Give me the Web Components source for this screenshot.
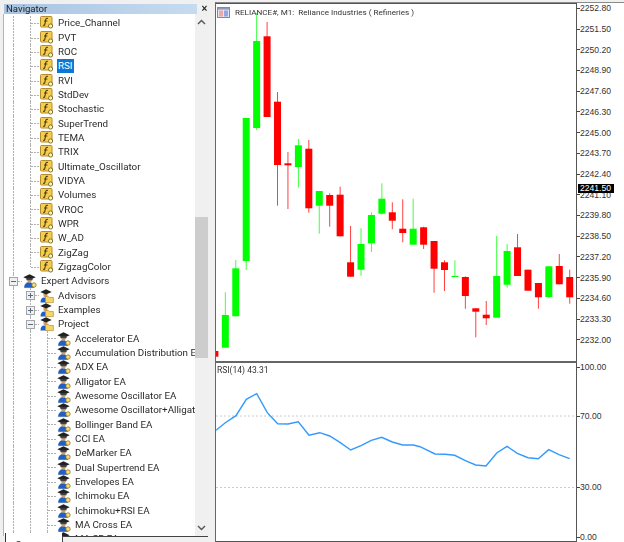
<!DOCTYPE html>
<html>
<head>
<meta charset="utf-8">
<title>Navigator</title>
<style>
    html, body { margin: 0; padding: 0; background: #f0f0f0; }
    body { width: 624px; height: 542px; overflow: hidden; font-family: Roboto, "Liberation Sans", sans-serif; }
    .app { display: flex; width: 624px; height: 542px; filter: blur(0.3px); }
</style>
</head>
<body>
<div class="app">
    <nav-panel>
        <tree-row guides="line branch" icon="fn">Price_Channel</tree-row>
        <tree-row guides="line branch" icon="fn">PVT</tree-row>
        <tree-row guides="line branch" icon="fn">ROC</tree-row>
        <tree-row guides="line branch" icon="fn" selected>RSI</tree-row>
        <tree-row guides="line branch" icon="fn">RVI</tree-row>
        <tree-row guides="line branch" icon="fn">StdDev</tree-row>
        <tree-row guides="line branch" icon="fn">Stochastic</tree-row>
        <tree-row guides="line branch" icon="fn">SuperTrend</tree-row>
        <tree-row guides="line branch" icon="fn">TEMA</tree-row>
        <tree-row guides="line branch" icon="fn">TRIX</tree-row>
        <tree-row guides="line branch" icon="fn">Ultimate_Oscillator</tree-row>
        <tree-row guides="line branch" icon="fn">VIDYA</tree-row>
        <tree-row guides="line branch" icon="fn">Volumes</tree-row>
        <tree-row guides="line branch" icon="fn">VROC</tree-row>
        <tree-row guides="line branch" icon="fn">WPR</tree-row>
        <tree-row guides="line branch" icon="fn">W_AD</tree-row>
        <tree-row guides="line branch" icon="fn">ZigZag</tree-row>
        <tree-row guides="line last" icon="fn">ZigzagColor</tree-row>
        <tree-row guides="minus" icon="ea">Expert Advisors</tree-row>
        <tree-row guides="line plus" icon="folder">Advisors</tree-row>
        <tree-row guides="line plus" icon="folder">Examples</tree-row>
        <tree-row guides="line minus" icon="folder">Project</tree-row>
        <tree-row guides="line line branch" icon="ea">Accelerator EA</tree-row>
        <tree-row guides="line line branch" icon="ea">Accumulation Distribution EA</tree-row>
        <tree-row guides="line line branch" icon="ea">ADX EA</tree-row>
        <tree-row guides="line line branch" icon="ea">Alligator EA</tree-row>
        <tree-row guides="line line branch" icon="ea">Awesome Oscillator EA</tree-row>
        <tree-row guides="line line branch" icon="ea">Awesome Oscillator+Alligator EA</tree-row>
        <tree-row guides="line line branch" icon="ea">Bollinger Band EA</tree-row>
        <tree-row guides="line line branch" icon="ea">CCI EA</tree-row>
        <tree-row guides="line line branch" icon="ea">DeMarker EA</tree-row>
        <tree-row guides="line line branch" icon="ea">Dual Supertrend EA</tree-row>
        <tree-row guides="line line branch" icon="ea">Envelopes EA</tree-row>
        <tree-row guides="line line branch" icon="ea">Ichimoku EA</tree-row>
        <tree-row guides="line line branch" icon="ea">Ichimoku+RSI EA</tree-row>
        <tree-row guides="line line branch" icon="ea">MA Cross EA</tree-row>
        <tree-row guides="line line branch" icon="ea">MA SR EA</tree-row>
    </nav-panel>
    <chart-window>
        <candle-pane></candle-pane>
        <rsi-pane></rsi-pane>
    </chart-window>
</div>
<script>
const ICONS = {
    fn: `<rect x=".5" y=".5" width="11.5" height="10.5" rx="1" fill="#f4cd50" stroke="#b48c28"/>
         <path d="M8 2.4C6.6 1.9 5.9 2.6 5.7 3.8L4.9 8.2C4.7 9.3 4 9.6 3.1 9.3" fill="none" stroke="#4d3c10" stroke-width="1.1"/>
         <path d="M4 5H7.4" stroke="#4d3c10" stroke-width="1"/>
         <circle cx="10.6" cy="10" r="2.1" fill="#fff3b8" stroke="#75661f" stroke-width=".9"/>`,
    ea: `<path d="M1.5 13.6C1.5 10 3.5 8.4 6 8.4S10.5 10 10.5 13.6Z" fill="#1f5fc8" stroke="#17458f" stroke-width=".5"/>
         <circle cx="6.5" cy="6.6" r="2.2" fill="#c9a070"/>
         <path d="M.3 3.2 6.5.3 12.7 3.2 6.5 6Z" fill="#222"/>
         <path d="M3.4 4.3V6.2H9.6V4.3" fill="#444"/>
         <circle cx="11" cy="11" r="2.2" fill="#f7e27a" stroke="#8a7420" stroke-width=".8"/>`,
    folder: `<path d="M.5 13.4C.5 10 2 8.4 4 8.4S7.5 10 7.5 13.4Z" fill="#1f5fc8"/>
         <circle cx="5.5" cy="6" r="2.2" fill="#c9a070"/>
         <path d="M.3 3 6 .3 11.7 3 6 5.6Z" fill="#222"/>
         <path d="M5.5 7.5H8.5L9.4 8.5H13.4V13.6H5.5Z" fill="#f6d465" stroke="#b9932f" stroke-width=".7"/>`
};

class TreeRow extends HTMLElement {
    constructor() {
        super();
        this.attachShadow({ mode: 'open' });
        const guides = (this.getAttribute('guides') || '').split(' ');
        const cells = guides.map(g => {
            const box = g === 'plus' || g === 'minus';
            return `<span class="cell ${g}">${box ? `<i class="box">${g === 'plus' ? '<b class="v"></b>' : ''}<b class="h"></b></i>` : ''}</span>`;
        }).join('');
        this.shadowRoot.innerHTML = `
            <style>
                :host { display: flex; align-items: center; height: 14.33px; padding-left: 1px; white-space: nowrap; }
                .cell { flex: none; width: 17px; height: 100%; position: relative; }
                .line, .branch, .plus, .minus { background: repeating-linear-gradient(to bottom, #b0b0b0 0 2px, transparent 2px 3px) 8px 0 / 1px 100% no-repeat; }
                .branch::after, .last::after {
                    content: ''; position: absolute; left: 9px; right: 0; top: 7px; height: 1px;
                    background: repeating-linear-gradient(to right, #b0b0b0 0 2px, transparent 2px 3px);
                }
                .last { background: repeating-linear-gradient(to bottom, #b0b0b0 0 2px, transparent 2px 3px) 8px 0 / 1px 50% no-repeat; }
                .plus::after, .minus::after {
                    content: ''; position: absolute; left: 13px; right: 0; top: 7px; height: 1px;
                    background: repeating-linear-gradient(to right, #b0b0b0 0 2px, transparent 2px 3px);
                }
                .box {
                    position: absolute; left: 4px; top: 3px; width: 7px; height: 7px;
                    border: 1px solid #a4a4a4; background: #eef0f2;
                }
                .box b { position: absolute; background: #5a6a80; }
                .box .h { left: 1px; right: 1px; top: 3px; height: 1px; }
                .box .v { top: 1px; bottom: 1px; left: 3px; width: 1px; }
                svg { flex: none; width: 14px; height: 14px; margin-left: 1px; overflow: visible; }
                .label {
                    margin-left: 3px; padding: 0 1px; height: 14px;
                    font: 9.8px/14px Roboto, "Liberation Sans", sans-serif; color: #2b2b2b;
                }
                :host([selected]) .label { background: #0a78d4; color: #fff; }
            </style>
            ${cells}
            <svg viewBox="0 0 14 14">${ICONS[this.getAttribute('icon')]}</svg>
            <span class="label"><slot></slot></span>
        `;
    }
}
customElements.define('tree-row', TreeRow);

class NavPanel extends HTMLElement {
    constructor() {
        super();
        this.attachShadow({ mode: 'open' });
        this.shadowRoot.innerHTML = `
            <style>
                :host { display: flex; flex-direction: column; flex: none; width: 212px; height: 542px; padding: 4px 0 0 3px; box-sizing: border-box; }
                .title { display: flex; height: 10px; align-items: center; }
                .caption {
                    width: 193px; height: 10px; margin-left: 1px; padding-left: 2px; box-sizing: border-box;
                    background: linear-gradient(to right, #a8c4e2, #c6dbf0);
                    font: 9.6px/10px Roboto, "Liberation Sans", sans-serif; color: #222;
                }
                .close { width: 15px; text-align: center; font: bold 10px/10px "Liberation Sans", sans-serif; color: #222; }
                .body { display: flex; height: 522px; border-left: 1px solid #b5b5b5; }
                .tree { width: 191px; overflow: hidden; background: #fff; padding-top: 2.2px; box-sizing: border-box; }
                .bar { width: 13px; display: flex; flex-direction: column; background: #f0f0f0; }
                .btn { flex: none; height: 16px; display: flex; align-items: center; justify-content: center; }
                .gap { flex: none; height: 187px; }
                .thumb { flex: none; height: 141px; background: #cdcdcd; }
                .tabs { display: flex; height: 9px; margin-top: -3px; position: relative; overflow: hidden; }
                .tab { box-sizing: border-box; font: 9.8px/12px Roboto, "Liberation Sans", sans-serif; color: #333; }
                .on { width: 57px; margin-left: 2px; padding: 6px 0 0 9px; background: #fff; border-left: 1px solid #333; }
                .off { width: 146px; margin-top: 3px; padding: 3px 0 0 8px; background: #f0f0f0; border-top: 1px solid #444; border-left: 1px solid #444; }
            </style>
            <div class="title"><div class="caption">Navigator</div><div class="close">×</div></div>
            <div class="body">
                <div class="tree"><slot></slot></div>
                <div class="bar">
                    <div class="btn"><svg width="9" height="6"><path d="M1 5 4.5 1.5 8 5" fill="none" stroke="#555" stroke-width="1.4"/></svg></div>
                    <div class="gap"></div>
                    <div class="thumb"></div>
                    <div style="flex:1"></div>
                    <div class="btn"><svg width="9" height="6"><path d="M1 1 4.5 4.5 8 1" fill="none" stroke="#555" stroke-width="1.4"/></svg></div>
                </div>
            </div>
            <div class="tabs"><div class="tab on">Common</div><div class="tab off">Favorites</div></div>
        `;
    }
}
customElements.define('nav-panel', NavPanel);

class ChartWindow extends HTMLElement {
    constructor() {
        super();
        this.attachShadow({ mode: 'open' });
        this.shadowRoot.innerHTML = `
            <style>
                :host {
                    display: flex; flex-direction: column; flex: none; width: 409px; height: 540px; margin: 2px 0 0 3px;
                    box-sizing: border-box; border-top: 1px solid #8a8a8a; border-left: 1px solid #666; background: #fff;
                }
            </style>
            <slot></slot>
        `;
    }
}
customElements.define('chart-window', ChartWindow);

// labels go down the axis, each with its gap to the one above
class ChartAxis extends HTMLElement {
    constructor() {
        super();
        this.attachShadow({ mode: 'open' });
        const labels = this.getAttribute('labels').split(' ');
        const gaps = this.getAttribute('gaps').split(' ');
        const rows = labels.map((l, i) => `<div class="tick" style="margin-top:${gaps[i] || gaps[gaps.length - 1]}px">${l}</div>`).join('');
        const tag = this.getAttribute('tag');
        this.shadowRoot.innerHTML = `
            <style>
                :host { display: block; flex: none; width: 46px; background: #fff; position: relative; }
                .tick { display: flex; align-items: center; height: 10px; font: 8.6px/10px "Liberation Sans", sans-serif; color: #333; white-space: nowrap; }
                .tick::before { content: ''; width: 3px; height: 1px; background: #444; }
                .tag {
                    position: absolute; left: 1px; top: ${this.getAttribute('tag-top')}px; width: 36px; height: 9px; padding-left: 2px; box-sizing: border-box;
                    background: #000; color: #fff; font: 8.6px/9px "Liberation Sans", sans-serif;
                }
            </style>
            ${rows}${tag ? `<div class="tag">${tag}</div>` : ''}
        `;
    }
}
customElements.define('chart-axis', ChartAxis);

// kind, wick top, body top, body bottom, wick bottom (page y)
const CANDLES = [
    ['r', 351, 351, 356.7, 356.7], ['g', 292.3, 315, 347.7, 347.7], ['g', 260, 268.3, 316.3, 316.3],
    ['g', 118, 118, 261, 270], ['g', 13, 41, 128, 130], ['r', 22, 36.3, 117, 117],
    ['r', 92, 101.7, 165, 205.7], ['r', 152, 163.3, 165.3, 209], ['g', 139, 145.3, 167, 187.5],
    ['r', 140, 148.7, 208.3, 212.7], ['g', 191, 191, 205.7, 233.7], ['r', 193.3, 195, 205.7, 226.7],
    ['r', 186.7, 194.7, 236.3, 236.3], ['r', 226, 262.3, 276.7, 276.7], ['g', 228.3, 244, 269.7, 275.7],
    ['g', 212.3, 215, 243.3, 252], ['g', 183.3, 198.7, 213.7, 214.5], ['r', 202.3, 212.3, 220.7, 229.3],
    ['r', 199.3, 228.7, 233, 242.3], ['g', 198.7, 228.7, 244.7, 244.7], ['r', 226.7, 227.3, 244.7, 249],
    ['r', 241, 241, 268.7, 292.7], ['r', 260.3, 262.3, 270, 291], ['g', 260.3, 276, 277, 277],
    ['r', 276.3, 277, 296, 308.7], ['r', 308.3, 308.3, 311.7, 337.3], ['r', 301, 314.7, 318.3, 325],
    ['g', 236, 276, 317.7, 317.7], ['g', 244, 251, 284.7, 287.7], ['r', 234, 247.3, 276, 276],
    ['r', 269.7, 269.7, 290.7, 290.7], ['r', 283, 283, 297.3, 308.7], ['g', 266.3, 266.3, 297, 298],
    ['r', 254, 266, 284.3, 284.3], ['r', 269.7, 277, 297.3, 303.7]
];
const barX = n => 214.9 + 10.436 * n;

class CandlePane extends HTMLElement {
    constructor() {
        super();
        this.attachShadow({ mode: 'open' });
        const bars = CANDLES.map(([k, wt, bt, bb, wb], n) => {
            const x = barX(n);
            const c = k === 'g' ? '#00ff00' : '#ff0000';
            return `<path d="M${x} ${wt}V${wb}" stroke="${c}" stroke-width="1" stroke-opacity=".75"/>
                <rect x="${x - 3.5}" y="${bt}" width="7" height="${Math.max(bb - bt, 1)}" fill="${c}"/>`;
        }).join('');
        this.shadowRoot.innerHTML = `
            <style>
                :host { display: flex; flex: none; height: 358px; position: relative; }
                .plot { flex: none; width: 361px; height: 358px; box-sizing: border-box; border-top: 1px solid #555; border-right: 1px solid #555; overflow: hidden; }
                svg { display: block; }
                .title {
                    position: absolute; left: 1px; top: 2px; display: flex; align-items: center; gap: 5px;
                    font: 8.1px/14px Roboto, "Liberation Sans", sans-serif; color: #333; white-space: pre;
                }
            </style>
            <div class="plot">
                <svg width="360" height="357" viewBox="216 4 360 357">${bars}</svg>
            </div>
            <chart-axis tag="2241.50" tag-top="181" gaps="0.3 10.73" labels="2252.80 2251.50 2250.20 2248.90 2247.60 2246.30 2245.00 2243.70 2242.40 2241.10 2239.80 2238.50 2237.20 2235.90 2234.60 2233.30 2232.00"></chart-axis>
            <div class="title">
                <svg width="13" height="11" viewBox="0 0 13 11">
                    <rect x=".5" y=".5" width="12" height="10" fill="#e4e6f2" stroke="#7f8aa8"/>
                    <rect x="1" y="1" width="11" height="1.6" fill="#8a9ac0"/>
                    <rect x="2" y="3.5" width="4" height="6" fill="#f0a8a0"/>
                    <rect x="7" y="3.5" width="4" height="6" fill="#8fa6e8"/>
                </svg>
                <span>RELIANCE#, M1:  Reliance Industries ( Refineries )</span>
            </div>
        `;
    }
}
customElements.define('candle-pane', CandlePane);

const RSI = [
    [216, 430.3], [225.3, 422.7], [236, 415.7], [246.3, 399.3], [256.7, 393.7], [267.3, 412.7], [277.7, 423.7], [288, 424],
    [298.3, 421.7], [309, 435.3], [319.7, 432.7], [329.7, 436], [340.3, 442.7], [350.7, 450], [361, 445.7], [371.3, 440.3],
    [381.7, 437.3], [392.3, 442], [402.7, 445], [413.3, 445], [420, 446.7], [435, 454], [445, 454.3], [454.7, 455.3],
    [465.3, 460.7], [475.7, 465], [486, 466], [496.7, 453], [507, 446.3], [517.3, 453.3], [528, 457.7], [538.3, 458.7],
    [548.7, 449.7], [559, 454.7], [569.7, 458.7]
];

class RsiPane extends HTMLElement {
    constructor() {
        super();
        this.attachShadow({ mode: 'open' });
        const line = RSI.map(p => p.join(',')).join(' ');
        this.shadowRoot.innerHTML = `
            <style>
                :host { display: flex; flex: none; height: 181px; position: relative; }
                .plot { flex: none; width: 361px; height: 181px; box-sizing: border-box; border-top: 2px solid #666; border-right: 1px solid #555; border-bottom: 1px solid #555; }
                svg { display: block; }
                .title { position: absolute; left: 1px; top: 2px; font: 8.5px/14px Roboto, "Liberation Sans", sans-serif; color: #333; }
            </style>
            <div class="plot">
                <svg width="360" height="178" viewBox="216 363 360 178">
                    <path d="M216 416H577" stroke="#ccc" stroke-dasharray="2 2"/>
                    <path d="M216 487.5H577" stroke="#ccc" stroke-dasharray="2 2"/>
                    <polyline points="${line}" fill="none" stroke="#3399ff" stroke-width="1.4"/>
                </svg>
            </div>
            <chart-axis gaps="1 39 61 40" labels="100.00 70.00 30.00 0.00"></chart-axis>
            <div class="title">RSI(14) 43.31</div>
        `;
    }
}
customElements.define('rsi-pane', RsiPane);
</script>
</body>
</html>
